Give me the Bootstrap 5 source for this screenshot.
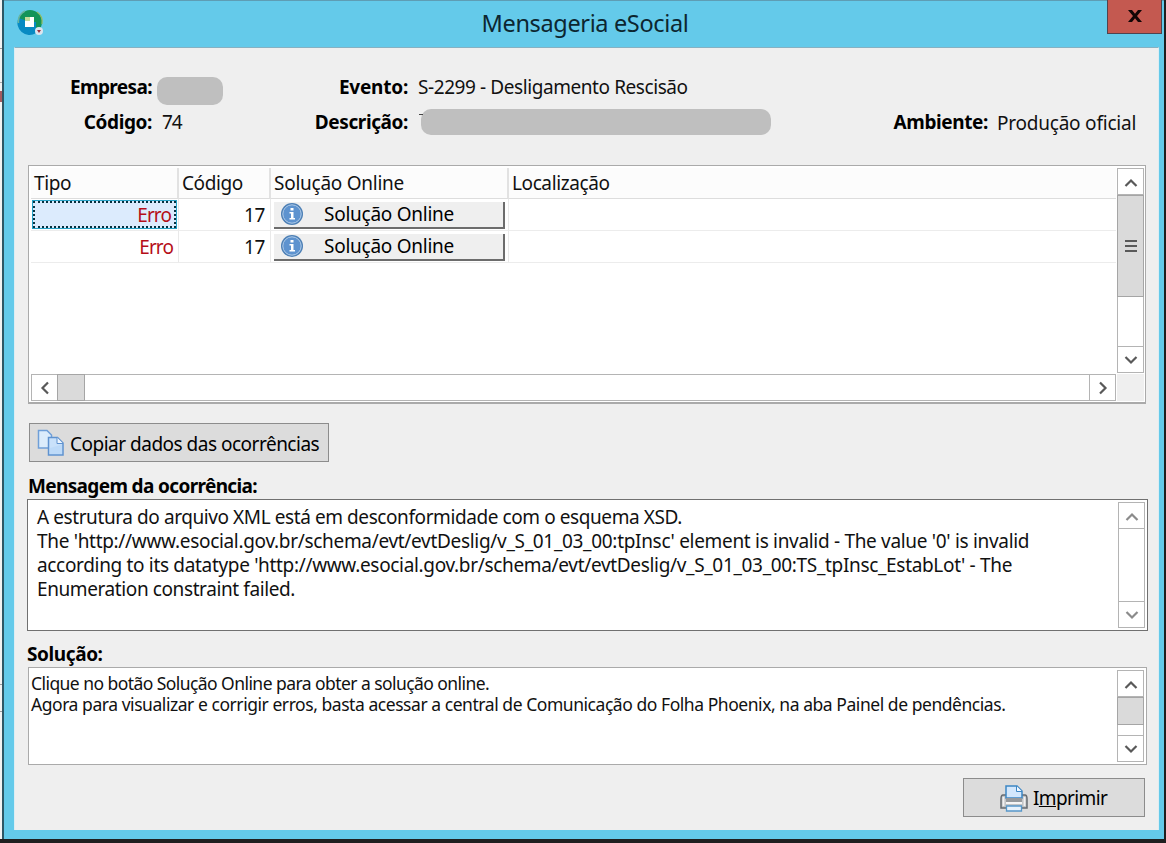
<!DOCTYPE html>
<html lang="pt-BR">
<head>
<meta charset="utf-8">
<title>Mensageria eSocial</title>
<link href="https://cdn.jsdelivr.net/npm/bootstrap@5.3.0/dist/css/bootstrap.min.css" rel="stylesheet">
<style>
*{box-sizing:border-box}
body{width:1166px;height:843px;overflow:hidden;background:#1f1f1f;font:19px/24px "Noto Sans","Open Sans",sans-serif;color:#111;letter-spacing:-.4px}
svg{display:block;flex:none}
.behind{width:4px;height:839px;background:linear-gradient(#999,#999) 0 48px/2px 1px no-repeat,linear-gradient(#a65b5f,#a65b5f) 0 91px/2px 11px no-repeat,linear-gradient(#aaa,#aaa) 0 82px/2px 1px no-repeat,linear-gradient(#999,#999) 0 684px/2px 1px no-repeat,linear-gradient(#999,#999) 0 711px/2px 1px no-repeat,#f2f2f2;border-right:2px solid #2d5766}
.win{width:1160px;height:839px;background:#64caea;border-top:1px solid #5e9db4;padding:0 5px 9px 10px}
.titlebar{height:46px;padding-left:3px}
.caption{font-size:23.5px;line-height:28px;letter-spacing:-.35px;color:#0c2630;margin:8px 0 0 16px}
.app-ico{width:30px;margin-top:6px}
.btn-x{width:55px;height:34px;margin-right:-3px;margin-top:-1px;background:#c45950;border:1.5px solid #50434f;border-top:0}
.client{height:783px;background:#efefef;border:solid #dcedf3;border-width:0 1px;border-top:1px solid #86b1c2;padding:0 10px 0 13px}
.fields{display:grid;grid-template-columns:124px 112px 124px 460px 100px 1fr;column-gap:10px;grid-template-rows:36px 34px;padding-top:21px;height:117px;flex:none;align-content:start;align-items:center}
.lbl{text-align:right;white-space:nowrap;line-height:24px}
b{font-weight:700;color:#000}
.mask{background:#bfbfbf;border-radius:10px}
.mask-sm{width:66px;height:28px;margin:7px 0 0 -5px}
.mask-lg{width:350px;height:26px;margin-left:3px;position:relative}
.mask-lg::before{content:"";position:absolute;left:-2px;top:5px;width:4px;height:1px;background:#444}
.grid-box{width:1118px;height:239px;border:2px solid #aaa;border-width:1px 1px 2px 1px;background:#fff;padding:2px;display:grid;grid-template-columns:1085px 27px;grid-template-rows:205px 27px;column-gap:1px;row-gap:1px;flex:none}
.occ{display:grid;grid-template-columns:148px 92px 238px 1fr;grid-template-rows:31px 32px 32px;align-content:start}
.occ>div{border-right:1px solid #e9e9e9;border-bottom:1px solid #ececec;display:flex;align-items:center;white-space:nowrap}
.occ>.hd{background:#fcfcfc;border-right:2px solid #e2e2e2;border-bottom-color:#ddd;padding-left:3px}
.occ>div:nth-child(4n){border-right:0}
.occ>.num{justify-content:flex-end;padding-right:5px}
.err{color:#b50e18}
.sel{background:#dcebfd;border:2px dotted #06303e;outline:1.5px solid #28a3c8;width:143px;height:27px;padding-right:3px}
.sol{width:231px;height:27px;background:#efefef;border:solid #6c6c6c;border-width:0 2px 2px 0;border-radius:0;padding:0 0 0 6px;margin:1px 0 0 3px}
.sb{background:#fff;border:1px solid #b4b4b4;display:flex}
.sb>i{display:flex;align-items:center;justify-content:center;flex:none}
.sb path{fill:none;stroke:#595959;stroke-width:2.2}
.sb.off path{stroke:#8b8b8b}
.v{flex-direction:column;width:27px}
.v>.up,.v>.dn{height:26px}
.up{border-bottom:1px solid #b4b4b4;padding-top:2px}.dn{border-top:1px solid #b4b4b4;margin-top:auto}
.thumb{background:#dadada;border:1px solid #a5a5a5}
.wbtn{background:#dcdcdc;border:1.5px solid #747474;outline:.5px solid #8c8c8c;outline-offset:-1px;border-radius:0;height:39px;padding:0;flex:none}
.head{flex:none;line-height:24px;white-space:nowrap}
.memo{background:#fff;flex:none;display:flex;justify-content:space-between;white-space:nowrap}
.memo1{width:1121px;height:132px;border:1.5px solid #707070;padding:2px;margin-left:-1px}
.memo2{width:1119px;height:98px;border:1.5px solid #aaa;padding:2px}
.memo2 .tx{font-size:17.5px;line-height:21px}
</style>
</head>
<body class="d-flex align-items-start m-0">
<div class="behind flex-shrink-0"></div>
<main class="win flex-shrink-0">
<header class="titlebar d-flex justify-content-between align-items-start">
<svg class="app-ico" width="30" height="30" viewBox="0 0 30 30"><circle cx="13" cy="15" r="12" fill="#139459"/><path d="M1.500 11A12 12 0 0 0 19 26V15H13Z" fill="#078ac2"/><path d="M1.500 16A12 12 0 0 1 8 4" fill="none" stroke="#68b5a0" stroke-width="1.500"/><path d="M20 5A12 12 0 0 1 25 17" fill="none" stroke="#92bc61" stroke-width="1.200"/><path d="M8 10H17V20H8Z" fill="#fff"/><path d="M8 10H13V14H8Z" fill="#c5dc9a"/><circle cx="22" cy="24" r="4" fill="#dce5ee"/><path d="M20 23L24 23L22 26Z" fill="#a0303a"/></svg>
<div class="caption">Mensageria eSocial</div>
<button class="btn-x d-flex justify-content-center p-0" aria-label="Fechar"><svg width="18" height="18" viewBox="0 0 18 18" style="margin-top:7px"><path d="M2 3H6L9 6.800L12 3H16L11 9L16 15H12L9 11.200L6 15H2L7 9Z" fill="#120606"/></svg></button>
</header>
<section class="client d-flex flex-column align-items-start">
<div class="fields">
<b class="lbl" style="letter-spacing:-.61px">Empresa:</b><div class="mask mask-sm"></div>
<b class="lbl" style="letter-spacing:-.23px">Evento:</b><span style="letter-spacing:-.42px">S-2299 - Desligamento Rescisão</span><span></span><span></span>
<b class="lbl">Código:</b><span style="letter-spacing:-1px">74</span>
<b class="lbl">Descrição:</b><div class="mask mask-lg"></div>
<b class="lbl">Ambiente:</b><span class="text-nowrap" style="letter-spacing:-.22px;padding-top:2px;margin-left:-1px">Produção oficial</span>
</div>
<div class="grid-box">
<div class="occ">
<div class="hd">Tipo</div><div class="hd">Código</div><div class="hd" style="letter-spacing:-.26px">Solução Online</div><div class="hd">Localização</div>
<div class="num err" style="padding:0"><span class="sel d-flex align-items-center justify-content-end mx-auto" style="letter-spacing:-.9px">Erro</span></div><div class="num">17</div>
<div><button class="sol d-flex align-items-center"><svg width="24" height="24" viewBox="0 0 24 24"><circle cx="12" cy="12" r="11" fill="#4c7fb5"/><circle cx="12" cy="12" r="9.200" fill="#5e93cf" stroke="#b2cdea"/><path d="M10.500 6H13.500V8.500H10.500ZM9.500 10H13.500V16H15V17.500H9.500V16H11V11.500H9.500Z" fill="#fff"/></svg><span class="ms-3 ps-1" style="letter-spacing:-.26px">Solução Online</span></button></div><div></div>
<div class="num err" style="letter-spacing:-.9px">Erro</div><div class="num">17</div>
<div><button class="sol d-flex align-items-center"><svg width="24" height="24" viewBox="0 0 24 24"><circle cx="12" cy="12" r="11" fill="#4c7fb5"/><circle cx="12" cy="12" r="9.200" fill="#5e93cf" stroke="#b2cdea"/><path d="M10.500 6H13.500V8.500H10.500ZM9.500 10H13.500V16H15V17.500H9.500V16H11V11.500H9.500Z" fill="#fff"/></svg><span class="ms-3 ps-1" style="letter-spacing:-.26px">Solução Online</span></button></div><div></div>
</div>
<div class="sb v"><i class="up"><svg width="14" height="10" viewBox="0 0 14 10"><path d="M1.500 8L7 2.500L12.500 8"/></svg></i><i class="thumb" style="height:102px;margin:0 -1px"><svg width="12" height="14" viewBox="0 0 12 14"><path d="M0 2H12M0 7H12M0 12H12"/></svg></i><i class="dn"><svg width="14" height="10" viewBox="0 0 14 10"><path d="M1.500 2L7 7.500L12.500 2"/></svg></i></div>
<div class="sb"><i style="width:25px"><svg width="10" height="14" viewBox="0 0 10 14"><path d="M8 1.500L2.500 7L8 12.500"/></svg></i><i class="thumb" style="width:28px;margin:-1px 0"></i><i class="ms-auto" style="width:26px;border-left:1px solid #b4b4b4"><svg width="10" height="14" viewBox="0 0 10 14"><path d="M2 1.500L7.500 7L2 12.500"/></svg></i></div>
<div style="background:#efefef"></div>
</div>
<button class="wbtn d-flex align-items-center" style="width:300px;margin:19px 0 0 1px;padding:2px 0 0 7px"><svg width="28" height="28" viewBox="0 0 28 28" style="margin-top:-2px"><path d="M1.500 1.500H10L14.500 6V19H1.500Z" fill="#dcecfb" stroke="#6f9fd8" stroke-width="1.500"/><path d="M11.500 8.500H20.500L26 14V26H11.500Z" fill="#c9e1fa" stroke="#5f92cf" stroke-width="1.500"/><path d="M20 8.500V14.500H26" fill="#eef6ff" stroke="#5f92cf"/><path d="M13 19L25 15.500V25H13Z" fill="#b5d5f6" opacity=".6"/></svg><span style="margin-left:5px;letter-spacing:-.5px">Copiar dados das ocorrências</span></button>
<b class="head" style="margin-top:12px;letter-spacing:-.64px">Mensagem da ocorrência:</b>
<div class="memo memo1" style="margin-top:1px"><div style="padding:3px 0 0 7px"><div style="letter-spacing:-.416px">A estrutura do arquivo XML está em desconformidade com o esquema XSD.</div><div style="letter-spacing:-.312px">The 'http://www.esocial.gov.br/schema/evt/evtDeslig/v_S_01_03_00:tpInsc' element is invalid - The value '0' is invalid</div><div style="letter-spacing:-.328px">according to its datatype 'http://www.esocial.gov.br/schema/evt/evtDeslig/v_S_01_03_00:TS_tpInsc_EstabLot' - The</div><div>Enumeration constraint failed.</div></div>
<div class="sb v off"><i class="up"><svg width="14" height="10" viewBox="0 0 14 10"><path d="M1.500 8L7 2.500L12.500 8"/></svg></i><i class="dn"><svg width="14" height="10" viewBox="0 0 14 10"><path d="M1.500 2L7 7.500L12.500 2"/></svg></i></div></div>
<b class="head" style="margin:11px 0 0 -1px">Solução:</b>
<div class="memo memo2" style="margin-top:1px"><div class="tx" style="padding-top:3px"><div style="letter-spacing:-.56px">Clique no botão Solução Online para obter a solução online.</div><div style="letter-spacing:-.45px">Agora para visualizar e corrigir erros, basta acessar a central de Comunicação do Folha Phoenix, na aba Painel de pendências.</div></div>
<div class="sb v"><i class="up"><svg width="14" height="10" viewBox="0 0 14 10"><path d="M1.500 8L7 2.500L12.500 8"/></svg></i><i class="thumb" style="height:28px;margin:0 -1px"></i><i class="dn"><svg width="14" height="10" viewBox="0 0 14 10"><path d="M1.500 2L7 7.500L12.500 2"/></svg></i></div></div>
<button class="wbtn d-flex align-items-center align-self-end" style="width:182px;margin:13px 3px 0 0;padding-left:36px"><svg width="28" height="28" viewBox="0 0 28 28"><path d="M3 11H25Q27 11 27 15V24H1V15Q1 11 3 11Z" fill="#c3c5c7" stroke="#666b70" stroke-width="1.500"/><path d="M6 14V2H17L22 7V14Z" fill="#d3e7fc" stroke="#3d86c4" stroke-width="1.500"/><path d="M16.500 2V7.500H22" fill="#f2f8ff" stroke="#3d86c4"/><path d="M6 14H22V18H6Z" fill="#96999c"/><path d="M6 19H22" stroke="#f5f5f5" stroke-width="2"/><path d="M3.500 13V22M24.500 13V22" stroke="#f1f1f1" stroke-width="1.800"/><path d="M6.500 22H21.500V27H6.500Z" fill="#e7f2fc" stroke="#5797c9" stroke-width="1.300"/></svg><span style="margin-left:5px;letter-spacing:-.62px">I<u>m</u>primir</span></button>
</section>
</main>
<script src="https://cdn.jsdelivr.net/npm/bootstrap@5.3.0/dist/js/bootstrap.bundle.min.js"></script>
</body>
</html>
